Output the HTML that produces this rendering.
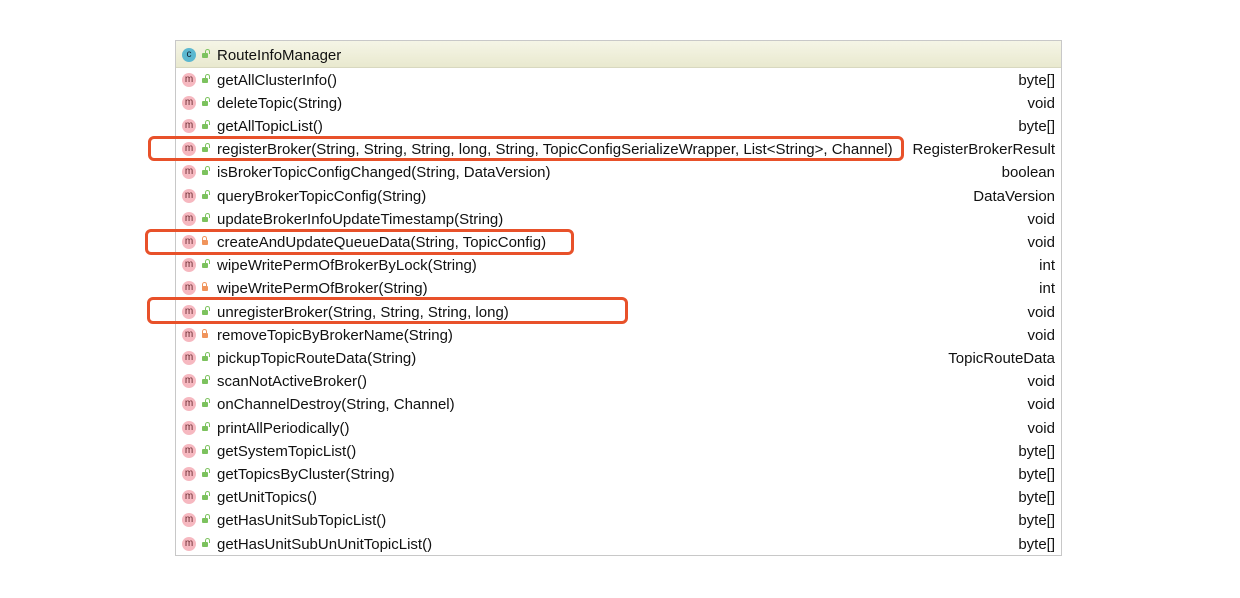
<!DOCTYPE html>
<html><head><meta charset="utf-8"><style>
body{margin:0;width:1240px;height:598px;background:#fff;position:relative;overflow:hidden;font-family:"Liberation Sans",sans-serif;}
.box{position:absolute;left:175px;top:40px;width:887px;height:516px;border:1px solid #c8c8c8;box-sizing:border-box;}
.hdr{position:absolute;left:176px;top:41px;width:885px;height:26px;background:linear-gradient(#f5f5e6,#e9e9cf);border-bottom:1px solid #d8d8c0;}
.row{position:absolute;left:176px;width:885px;height:23px;font-size:15px;color:#111;line-height:25px;}
.ic{position:absolute;left:6px;top:5px;width:14px;height:14px;border-radius:50%;background:#f6b8c0;font-size:10px;line-height:13px;text-align:center;color:#6a2a30;}
.lk{position:absolute;left:26px;top:10px;width:6px;height:5px;border-radius:1px;background:#7cc25e;}
.lk:before{content:"";position:absolute;left:3px;top:-4px;width:3px;height:4px;border:1px solid #7cc25e;border-bottom:none;border-radius:3px 3px 0 0;}
.lk.p{background:#f0945c;}
.lk.p:before{border-color:#f0945c;left:0px;}
.nm{position:absolute;left:41px;top:0;white-space:nowrap;}
.rt{position:absolute;right:6px;top:0;white-space:nowrap;}
.red{position:absolute;border:3px solid #e8512a;border-radius:6px;box-sizing:border-box;}
</style></head><body>
<div class="box"></div>
<div class="hdr"></div>
<div class="row" style="top:43px"><div class="ic" style="background:#5cb8d0;color:#123">c</div><div class="lk"></div><div class="nm">RouteInfoManager</div></div>
<div class="row" style="top:67.5px"><div class="ic">m</div><div class="lk"></div><div class="nm">getAllClusterInfo()</div><div class="rt">byte[]</div></div>
<div class="row" style="top:90.7px"><div class="ic">m</div><div class="lk"></div><div class="nm">deleteTopic(String)</div><div class="rt">void</div></div>
<div class="row" style="top:113.9px"><div class="ic">m</div><div class="lk"></div><div class="nm">getAllTopicList()</div><div class="rt">byte[]</div></div>
<div class="row" style="top:137.1px"><div class="ic">m</div><div class="lk"></div><div class="nm">registerBroker(String, String, String, long, String, TopicConfigSerializeWrapper, List&lt;String&gt;, Channel)</div><div class="rt">RegisterBrokerResult</div></div>
<div class="row" style="top:160.3px"><div class="ic">m</div><div class="lk"></div><div class="nm">isBrokerTopicConfigChanged(String, DataVersion)</div><div class="rt">boolean</div></div>
<div class="row" style="top:183.5px"><div class="ic">m</div><div class="lk"></div><div class="nm">queryBrokerTopicConfig(String)</div><div class="rt">DataVersion</div></div>
<div class="row" style="top:206.7px"><div class="ic">m</div><div class="lk"></div><div class="nm">updateBrokerInfoUpdateTimestamp(String)</div><div class="rt">void</div></div>
<div class="row" style="top:229.9px"><div class="ic">m</div><div class="lk p"></div><div class="nm">createAndUpdateQueueData(String, TopicConfig)</div><div class="rt">void</div></div>
<div class="row" style="top:253.1px"><div class="ic">m</div><div class="lk"></div><div class="nm">wipeWritePermOfBrokerByLock(String)</div><div class="rt">int</div></div>
<div class="row" style="top:276.3px"><div class="ic">m</div><div class="lk p"></div><div class="nm">wipeWritePermOfBroker(String)</div><div class="rt">int</div></div>
<div class="row" style="top:299.5px"><div class="ic">m</div><div class="lk"></div><div class="nm">unregisterBroker(String, String, String, long)</div><div class="rt">void</div></div>
<div class="row" style="top:322.7px"><div class="ic">m</div><div class="lk p"></div><div class="nm">removeTopicByBrokerName(String)</div><div class="rt">void</div></div>
<div class="row" style="top:345.9px"><div class="ic">m</div><div class="lk"></div><div class="nm">pickupTopicRouteData(String)</div><div class="rt">TopicRouteData</div></div>
<div class="row" style="top:369.1px"><div class="ic">m</div><div class="lk"></div><div class="nm">scanNotActiveBroker()</div><div class="rt">void</div></div>
<div class="row" style="top:392.3px"><div class="ic">m</div><div class="lk"></div><div class="nm">onChannelDestroy(String, Channel)</div><div class="rt">void</div></div>
<div class="row" style="top:415.5px"><div class="ic">m</div><div class="lk"></div><div class="nm">printAllPeriodically()</div><div class="rt">void</div></div>
<div class="row" style="top:438.7px"><div class="ic">m</div><div class="lk"></div><div class="nm">getSystemTopicList()</div><div class="rt">byte[]</div></div>
<div class="row" style="top:461.9px"><div class="ic">m</div><div class="lk"></div><div class="nm">getTopicsByCluster(String)</div><div class="rt">byte[]</div></div>
<div class="row" style="top:485.1px"><div class="ic">m</div><div class="lk"></div><div class="nm">getUnitTopics()</div><div class="rt">byte[]</div></div>
<div class="row" style="top:508.3px"><div class="ic">m</div><div class="lk"></div><div class="nm">getHasUnitSubTopicList()</div><div class="rt">byte[]</div></div>
<div class="row" style="top:531.5px"><div class="ic">m</div><div class="lk"></div><div class="nm">getHasUnitSubUnUnitTopicList()</div><div class="rt">byte[]</div></div>
<div class="red" style="left:148px;top:136px;width:756px;height:25px"></div>
<div class="red" style="left:145px;top:229px;width:429px;height:26px"></div>
<div class="red" style="left:147px;top:297px;width:481px;height:27px"></div>
</body></html>
